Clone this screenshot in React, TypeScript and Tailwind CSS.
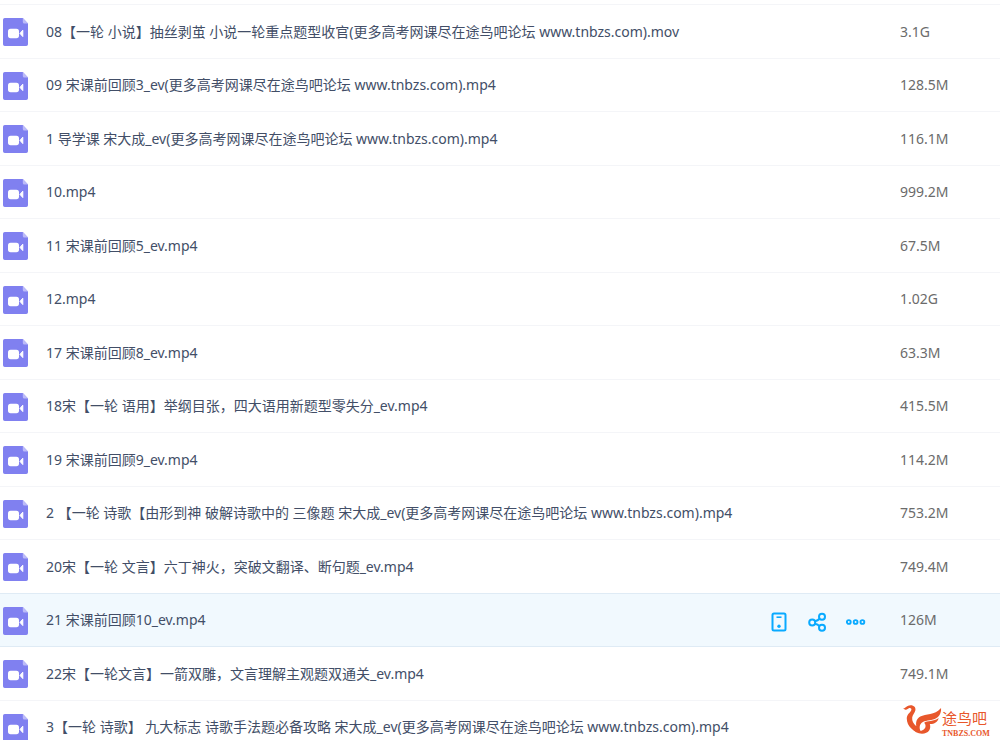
// File list of a cloud drive folder: one table row per video,
// with quick actions shown on the highlighted row.

type FileItem = { name: string; size?: string };

const FILES: FileItem[] = [
  { name: '08【一轮 小说】抽丝剥茧 小说一轮重点题型收官(更多高考网课尽在途鸟吧论坛 www.tnbzs.com).mov', size: '3.1G' },
  { name: '09 宋课前回顾3_ev(更多高考网课尽在途鸟吧论坛 www.tnbzs.com).mp4', size: '128.5M' },
  { name: '1 导学课 宋大成_ev(更多高考网课尽在途鸟吧论坛 www.tnbzs.com).mp4', size: '116.1M' },
  { name: '10.mp4', size: '999.2M' },
  { name: '11 宋课前回顾5_ev.mp4', size: '67.5M' },
  { name: '12.mp4', size: '1.02G' },
  { name: '17 宋课前回顾8_ev.mp4', size: '63.3M' },
  { name: '18宋【一轮 语用】举纲目张，四大语用新题型零失分_ev.mp4', size: '415.5M' },
  { name: '19 宋课前回顾9_ev.mp4', size: '114.2M' },
  { name: '2 【一轮 诗歌【由形到神 破解诗歌中的 三像题 宋大成_ev(更多高考网课尽在途鸟吧论坛 www.tnbzs.com).mp4', size: '753.2M' },
  { name: '20宋【一轮 文言】六丁神火，突破文翻译、断句题_ev.mp4', size: '749.4M' },
  { name: '21 宋课前回顾10_ev.mp4', size: '126M' },
  { name: '22宋【一轮文言】一箭双雕，文言理解主观题双通关_ev.mp4', size: '749.1M' },
  { name: '3【一轮 诗歌】 九大标志 诗歌手法题必备攻略 宋大成_ev(更多高考网课尽在途鸟吧论坛 www.tnbzs.com).mp4' },
];

const ACTIVE_INDEX = 11;

export default function App() {
  return (
    <main lang="zh-CN" className="relative h-screen overflow-hidden bg-white pt-1 font-['Noto_Sans','Noto_Sans_CJK_SC',sans-serif]">
      <table className="w-full table-fixed border-collapse text-sm leading-5">
        <tbody>
          {FILES.map((file, i) => (
            <FileRow key={file.name} file={file} active={i === ACTIVE_INDEX} />
          ))}
        </tbody>
      </table>
      <Watermark />
    </main>
  );
}

function FileRow({ file, active }: { file: FileItem; active: boolean }) {
  return (
    <tr
      className={
        active
          ? 'h-[53px] border-y border-[#dfebf5] bg-[#f1f9fe] odd:h-[54px]'
          : 'h-[53px] border-t border-[#f4f5f8] odd:h-[54px]'
      }
    >
      <td className="w-[46px] pl-[3px] pt-px"><VideoIcon /></td>
      <td className="whitespace-nowrap text-[#424e67]">{file.name}</td>
      <td className="w-[130px]">{active && <RowActions />}</td>
      <td className="w-[100px] text-[#6b6b6b]">{file.size}</td>
    </tr>
  );
}

function RowActions() {
  return (
    <div className="flex items-center gap-[18px] pt-1 text-[#09aaff]">
      <button type="button" aria-label="发送到设备" className="h-5 w-5">
        <svg viewBox="0 0 20 20" className="h-5 w-5" fill="none" stroke="currentColor" strokeWidth="2">
          <rect x="2.5" y="1.5" width="13" height="17" rx="1.5" />
          <path d="M6.500 5.200h5" strokeWidth="1.6" />
          <circle cx="9" cy="14.2" r="1.7" fill="currentColor" stroke="none" />
        </svg>
      </button>
      <button type="button" aria-label="分享" className="h-5 w-5">
        <svg viewBox="0 0 20 20" className="h-5 w-5" fill="none" stroke="currentColor" strokeWidth="2">
          <circle cx="4.2" cy="10.5" r="3" />
          <circle cx="14" cy="4.8" r="3" />
          <circle cx="14" cy="15.8" r="3" />
          <path d="M7 9.300C9 8.700 10.500 7.800 11.600 6.700M7 11.700c2 .5 3.400 1.300 4.400 2.400" />
        </svg>
      </button>
      <button type="button" aria-label="更多" className="h-5 w-5">
        <svg viewBox="0 0 20 20" className="h-5 w-5" fill="none" stroke="currentColor" strokeWidth="1.9">
          <circle cx="2.8" cy="10" r="1.9" />
          <circle cx="9.6" cy="10" r="1.9" />
          <circle cx="16.4" cy="10" r="1.9" />
        </svg>
      </button>
    </div>
  );
}

function VideoIcon() {
  return (
    <svg viewBox="0 0 25 28" className="block h-7 w-[25px]" aria-hidden="true">
      <path d="M1.800 0h18L25 5.500V26.200a1.800 1.800 0 0 1-1.800 1.800H1.800A1.800 1.800 0 0 1 0 26.200V1.800A1.800 1.800 0 0 1 1.800 0z" fill="#8080f0" />
      <path d="M19.800 0 25 5.500h-3.700a1.500 1.500 0 0 1-1.500-1.500z" fill="#bcbbf8" />
      <rect x="5" y="10.700" width="11" height="9.500" rx="2.600" fill="#fff" />
      <path d="M17 15.400 19.800 12.200v6.400z" fill="#fff" stroke="#fff" strokeWidth="1" strokeLinejoin="round" />
    </svg>
  );
}

function Watermark() {
  return (
    <div className="absolute bottom-0 right-0 flex h-[38px] w-[98px] items-start bg-white text-[#e8572b]">
      <svg viewBox="0 0 42 34" className="h-[34px] w-10 shrink-0" fill="currentColor" aria-hidden="true">
        {/* crest, head and the outer sweep of the body */}
        <path d="M1 5.500C3.500 6.500 4.500 2.500 9 2.500c3.700 0 5.700 2.500 5 5.500-.6 2.700-3 4.500-3.300 7.500-.4 3.500 1.300 6.500 4.300 9-.8-4.500.7-8 4.200-10C25 11.500 34 13.500 41 5.500c.5 6.500-3 10-6.500 11.500-5 2-10.500 1.200-13.800 4-2.700 2.300-2.700 6-.7 10C13 31.500 5 25 5 16.500 5 12 9 10 9.800 7.500c.4-1.500-.7-2.300-2.100-2C5.500 6 5 9.500 1 5.500z" />
        {/* second feather and the hook under the wing */}
        <path d="M38.500 16c-1 4.700-5 6.500-9.300 6.300 1.700 5-1.200 10.200-8.200 10.200-4.500 0-8.500-2-10.500-6 4 3.500 8.800 3.800 12 1.800 2.700-1.700 3-4.800.8-7.300 3-2.500 10.200-1 15.200-5z" />
      </svg>
      <div className="flex flex-col gap-0.5 pt-1.5">
        <span className="font-['Noto_Sans_CJK_SC',sans-serif] text-[15px] leading-5">途鸟吧</span>
        <span className="font-['Liberation_Serif',serif] text-[8px] font-bold leading-2">TNBZS.COM</span>
      </div>
    </div>
  );
}
